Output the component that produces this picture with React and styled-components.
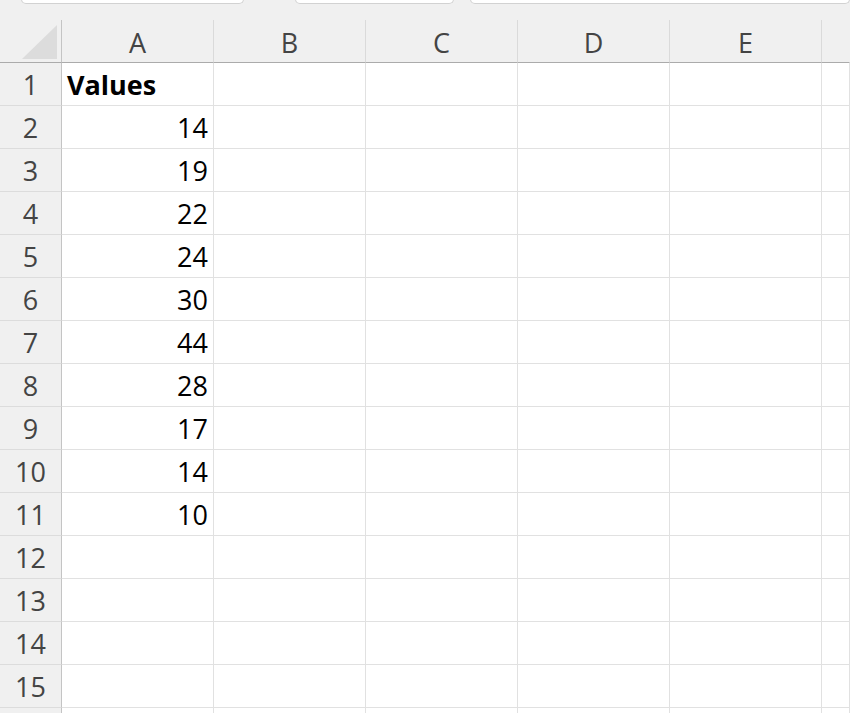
import React from 'react'
import styled, {createGlobalStyle} from 'styled-components'

//STYLING
const GlobalStyle = createGlobalStyle`
html, body {
  margin: 0;
  padding: 0;
  background: #ffffff;
  overflow: hidden;
}
`

const Page = styled.div`
width: 850px;
height: 713px;
overflow: hidden;
font-family: "Open Sans", "Noto Sans", sans-serif;
background: #ffffff;
`

const TabStrip = styled.div`
height: 20px;
background: #f0f0f0;
display: flex;
align-items: flex-start;
`

const Tab = styled.div`
height: 4px;
margin-left: ${props => props.offset}px;
width: ${props => props.width}px;
flex: ${props => props.grow ? 1 : 'none'};
background: #ffffff;
border: 1px solid #d2d2d2;
border-top: none;
border-radius: 0 0 7px 7px;
margin-top: -1px;
`

const Grid = styled.div`
display: grid;
grid-template-columns: 62px repeat(5, 152px) 1fr;
grid-auto-rows: 43px;
`

const Corner = styled.div`
background: #f0f0f0;
border-right: 1px solid #c4c4c4;
border-bottom: 1px solid #ababab;
display: flex;
align-items: flex-end;
justify-content: flex-end;
padding: 0 4px 3px 0;
`

const ColHeader = styled.div`
background: #f0f0f0;
border-right: 1px solid ${props => props.last ? 'transparent' : '#dadada'};
border-bottom: 1px solid #ababab;
color: #444444;
font-size: 27px;
display: flex;
align-items: center;
justify-content: center;
padding-top: 2px;
`

const RowHeader = styled.div`
background: #f0f0f0;
border-right: 1px solid #c4c4c4;
border-bottom: 1px solid #dcdcdc;
color: #444444;
font-size: 27px;
display: flex;
align-items: center;
justify-content: center;
padding-top: 1px;
`

const Cell = styled.div`
border-right: 1px solid #e1e1e1;
border-bottom: 1px solid #e1e1e1;
color: #000000;
font-size: 27px;
font-weight: ${props => props.bold ? 700 : 400};
display: flex;
align-items: center;
justify-content: ${props => props.right ? 'flex-end' : 'flex-start'};
padding: 1px 5px 0 5px;
overflow: hidden;
white-space: nowrap;
`

const columns = ['A', 'B', 'C', 'D', 'E', '']
const values = [14, 19, 22, 24, 30, 44, 28, 17, 14, 10]

const CornerTriangle = () => (
  <svg width="35" height="34" viewBox="0 0 35 34">
    <polygon points="35,0 35,34 0,34" fill="#dcdcdc" />
  </svg>
)

export default function App() {

  const rows = []
  // row 16 only peeks in at the bottom edge, so its number is left out
  for (let i = 1; i <= 16; i++) {
    let aCell
    if (i === 1) aCell = <Cell bold>Values</Cell>
    else if (i <= 11) aCell = <Cell right>{values[i - 2]}</Cell>
    else aCell = <Cell />
    rows.push(
      <React.Fragment key={i}>
        <RowHeader>{i <= 15 ? i : ''}</RowHeader>
        {aCell}
        <Cell /><Cell /><Cell /><Cell /><Cell />
      </React.Fragment>
    )
  }

  return (
    <Page>
      <GlobalStyle />
      <TabStrip>
        <Tab offset={21} width={221} />
        <Tab offset={51} width={157} />
        <Tab offset={16} grow />
      </TabStrip>
      <Grid>
        <Corner><CornerTriangle /></Corner>
        {columns.map((c, i) => (
          <ColHeader key={i} last={i === columns.length - 1}>{c}</ColHeader>
        ))}
        {rows}
      </Grid>
    </Page>
  )
}
